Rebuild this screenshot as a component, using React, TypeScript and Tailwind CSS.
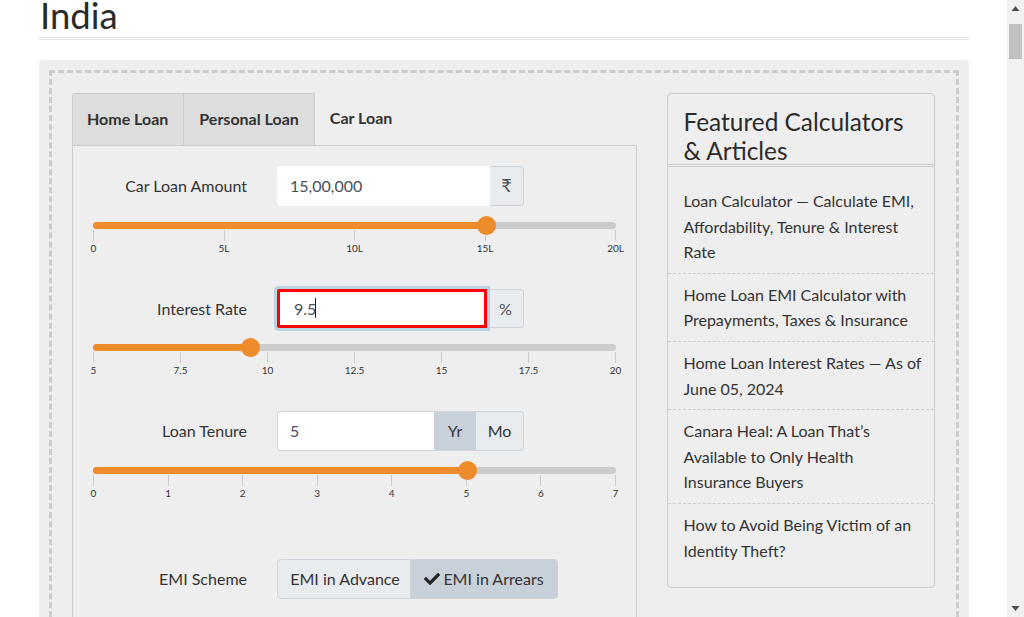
import { FaCheck } from "react-icons/fa";

function Slider({ pct, ticks }: { pct: number; ticks: string[] }) {
  return (
    <div className="mt-4">
      <div className="relative h-[7px] rounded-[4px] bg-[#cccccc]">
        <div className="h-full rounded-[4px] bg-[#ee8c2c]" style={{ width: `${pct}%` }} />
        <div
          className="absolute top-[-6px] ml-[-8.5px] h-[19px] w-[19px] rounded-full bg-[#ee8c2c]"
          style={{ left: `${pct}%` }}
        />
      </div>
      <div className="mt-px flex justify-between">
        {ticks.map((t) => (
          <div key={t} className="flex w-px flex-col items-center">
            <div className="h-[11px] w-px shrink-0 bg-[#cccccc]" />
            <div className="whitespace-nowrap text-[10px] leading-[14px] text-[#333333]">{t}</div>
          </div>
        ))}
      </div>
    </div>
  );
}

function Label({ children }: { children: string }) {
  return <div className="mr-[30px] w-[154px] text-right text-[#333333]">{children}</div>;
}

const links = [
  "Loan Calculator — Calculate EMI, Affordability, Tenure & Interest Rate",
  "Home Loan EMI Calculator with Prepayments, Taxes & Insurance",
  "Home Loan Interest Rates — As of June 05, 2024",
  "Canara Heal: A Loan That’s Available to Only Health Insurance Buyers",
  "How to Avoid Being Victim of an Identity Theft?",
];

export default function App() {
  return (
    <div className="flex h-[617px] overflow-hidden bg-white font-['Lato','Noto_Sans',sans-serif] text-base leading-[1.6] text-[#333333]">
      <main className="min-w-0 flex-1 pl-[39px] pr-[38px]">
        <h1 className="h-[40px] border-b-[3px] border-double border-[#e4e4e4] pl-px text-[36.5px] leading-[31px] text-[#2b2b2b]">
          India
        </h1>
        <div className="mt-5 rounded-[4px] bg-[#eeeeee] p-[10px]">
          <div className="flex h-[800px] items-start border-[3px] border-dashed border-[#cccccc] pl-[20px] pr-[21px] pt-[20px]">
            <section className="w-[565px] shrink-0">
              <div className="flex h-[52px] text-base font-bold leading-[25px]">
                <div className="flex items-center rounded-tl-[4px] border-l border-r border-t border-[#cccccc] bg-[#dddddd] pb-[2px] pl-[14px] pr-[15px]">
                  Home Loan
                </div>
                <div className="flex items-center border-r border-t border-[#cccccc] bg-[#dddddd] px-[15px] pb-[2px]">
                  Personal Loan
                </div>
                <div className="flex items-center px-[15px] pb-[3px]">Car Loan</div>
              </div>
              <div className="h-[700px] border border-[#cccccc] px-5 pt-5">
                <div className="h-[122.7px]">
                  <div className="flex items-center">
                    <Label>Car Loan Amount</Label>
                    <div className="flex h-[39.6px] w-[247px]">
                      <div className="flex flex-1 items-center rounded-l-[4px] bg-white px-[13px] text-[#495057]">
                        15,00,000
                      </div>
                      <div className="flex w-[34px] items-center justify-center rounded-r-[4px] border border-l-0 border-[#ced4da] bg-[#e9ecef] text-[18px] text-[#495057]">
                        ₹
                      </div>
                    </div>
                  </div>
                  <Slider pct={75} ticks={["0", "5L", "10L", "15L", "20L"]} />
                </div>
                <div className="h-[122.7px]">
                  <div className="flex items-center">
                    <Label>Interest Rate</Label>
                    <div className="flex h-[39.6px] w-[247px]">
                      <div className="mr-[3px] flex flex-1 items-center rounded-l-[2px] border-[3px] border-[#ff0000] bg-white pl-[14px] text-[#495057] shadow-[0_0_0_3px_#b8d4e3]">
                        9.5
                        <span className="ml-[-1px] h-[20px] w-px bg-[#222222]" />
                      </div>
                      <div className="flex w-[34px] items-center justify-center rounded-r-[4px] border border-l-0 border-[#ced4da] bg-[#e9ecef] pr-[2px] text-[#495057]">
                        %
                      </div>
                    </div>
                  </div>
                  <Slider pct={30} ticks={["5", "7.5", "10", "12.5", "15", "17.5", "20"]} />
                </div>
                <div className="h-[148px]">
                  <div className="flex items-center">
                    <Label>Loan Tenure</Label>
                    <div className="flex h-[39.6px] w-[247px] text-[#495057]">
                      <div className="flex flex-1 items-center rounded-l-[4px] border border-r-0 border-[#ced4da] bg-white px-[12px]">
                        5
                      </div>
                      <div className="flex w-[42px] items-center justify-center border-y border-[#ced4da] bg-[#c8d1d9] text-[#333333]">
                        Yr
                      </div>
                      <div className="flex w-[48px] items-center justify-center rounded-r-[4px] border border-l-0 border-[#ced4da] bg-[#e9ecef] text-[#333333]">
                        Mo
                      </div>
                    </div>
                  </div>
                  <Slider pct={71.5} ticks={["0", "1", "2", "3", "4", "5", "6", "7"]} />
                </div>
                <div className="flex items-center">
                  <Label>EMI Scheme</Label>
                  <div className="flex h-[39.6px] text-[#333333]">
                    <div className="flex w-[134px] items-center justify-center rounded-l-[4px] border border-[#ced4da] bg-[#e9ecef] pl-[2px]">
                      EMI in Advance
                    </div>
                    <div className="flex w-[147px] items-center justify-center gap-[3px] rounded-r-[4px] border border-l-0 border-[#ced4da] bg-[#c8d1d9]">
                      <FaCheck className="h-[16px] w-[16px] text-[#222222]" />
                      EMI in Arrears
                    </div>
                  </div>
                </div>
              </div>
            </section>
            <aside className="ml-[30px] h-[495px] w-[268px] shrink-0 rounded-[4px] border border-[#cccccc]">
              <h2 className="h-[73px] border-b-[3px] border-double border-[#cccccc] pl-[15.5px] pr-3 pt-[13px] text-[24.4px] leading-[29px] text-[#2b2b2b]">
                Featured Calculators &amp; Articles
              </h2>
              <ul className="pt-[13px]">
                {links.map((l, i) => (
                  <li
                    key={l}
                    className={`pl-[15.5px] pr-3 py-2 ${i < links.length - 1 ? "border-b border-dashed border-[#cccccc]" : ""}`}
                  >
                    {l}
                  </li>
                ))}
              </ul>
            </aside>
          </div>
        </div>
      </main>
      <div className="flex w-[17px] shrink-0 flex-col items-center bg-[#f1f1f1]">
        <svg viewBox="0 0 17 17" className="h-[17px] w-[17px] shrink-0">
          <path d="M8.5 6 L12.5 11 H4.5 Z" fill="#505050" />
        </svg>
        <div className="mt-[7px] h-[35px] w-[13px] bg-[#c1c1c1]" />
        <div className="flex-1" />
        <svg viewBox="0 0 17 17" className="h-[17px] w-[17px] shrink-0">
          <path d="M4.5 6 H12.5 L8.5 11 Z" fill="#505050" />
        </svg>
      </div>
    </div>
  );
}
